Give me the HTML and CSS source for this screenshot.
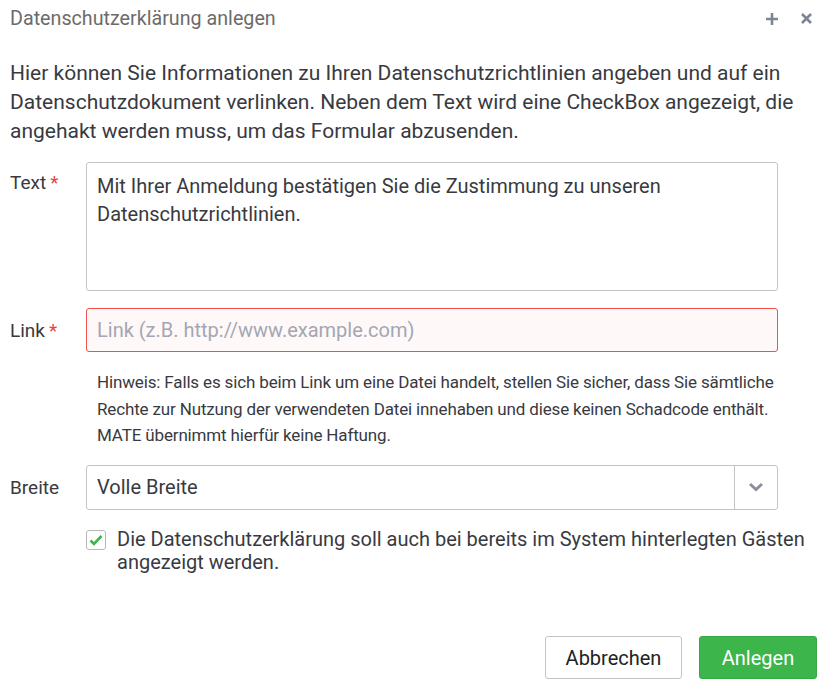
FILE: index.html
```html
<!DOCTYPE html>
<html lang="de">
<head>
    <meta charset="UTF-8">
    <title>Datenschutzerklärung anlegen</title>
    <link rel="stylesheet" href="styles.css">
</head>
<body>
    <div class="dialog">
        <div class="dialog-header">
            <span class="dialog-title">Datenschutzerklärung anlegen</span>
            <div class="header-icons">
                <svg width="14" height="14" viewBox="0 0 14 14"><path d="M7 1v12M1 7h12" stroke="#7d8594" stroke-width="2.6"/></svg>
                <svg width="13" height="13" viewBox="0 0 13 13"><path d="M2 2l9 9M11 2l-9 9" stroke="#7d8594" stroke-width="2.6"/></svg>
            </div>
        </div>

        <p class="intro">Hier können Sie Informationen zu Ihren Datenschutzrichtlinien angeben und auf ein Datenschutzdokument verlinken. Neben dem Text wird eine CheckBox angezeigt, die angehakt werden muss, um das Formular abzusenden.</p>

        <div class="form">
            <div class="form-row">
                <label class="form-label label-top">Text<span class="req">*</span></label>
                <div class="textarea">Mit Ihrer Anmeldung bestätigen Sie die Zustimmung zu unseren Datenschutzrichtlinien.</div>
            </div>

            <div class="form-row">
                <label class="form-label">Link<span class="req">*</span></label>
                <div class="input input-error">Link (z.B. http://www.example.com)</div>
            </div>

            <p class="hint">Hinweis: Falls es sich beim Link um eine Datei handelt, stellen Sie sicher, dass Sie sämtliche Rechte zur Nutzung der verwendeten Datei innehaben und diese keinen Schadcode enthält. MATE übernimmt hierfür keine Haftung.</p>

            <div class="form-row">
                <label class="form-label">Breite</label>
                <div class="select">
                    <span class="select-value">Volle Breite</span>
                    <span class="select-arrow">
                        <svg width="16" height="10" viewBox="0 0 16 10"><path d="M2 2l6 5.5L14 2" fill="none" stroke="#8a8f99" stroke-width="3"/></svg>
                    </span>
                </div>
            </div>

            <div class="check-row">
                <span class="checkbox">
                    <svg width="14" height="12" viewBox="0 0 14 12"><path d="M1.5 6.5l3.5 3.5 7.5-8" fill="none" stroke="#3cb54a" stroke-width="2.6"/></svg>
                </span>
                <span class="check-label">Die Datenschutzerklärung soll auch bei bereits im System hinterlegten Gästen angezeigt werden.</span>
            </div>
        </div>

        <div class="dialog-footer">
            <button class="btn btn-default">Abbrechen</button>
            <button class="btn btn-success">Anlegen</button>
        </div>
    </div>
</body>
</html>
```

FILE: styles.css
```css
* {
    box-sizing: border-box;
}
body {
    margin: 0;
    background-color: #fff;
    font-family: Roboto, "Liberation Sans", sans-serif;
    color: #383a3f;
}
.dialog {
    width: 830px;
    height: 686px;
    display: flex;
    flex-direction: column;
}
.dialog-header {
    display: flex;
    align-items: center;
    justify-content: space-between;
    height: 37px;
    padding: 0 17px 0 10px;
}
.dialog-title {
    font-size: 19.7px;
    color: #6b6b6b;
}
.header-icons {
    display: flex;
    align-items: center;
    gap: 21px;
}
.intro {
    margin: 22px 30px 0 10px;
    font-size: 21px;
    line-height: 29px;
}
.form {
    padding: 16px 52px 0 10px;
}
.form-row {
    display: flex;
    align-items: center;
    margin-bottom: 17px;
}
.form-label {
    width: 76px;
    flex-shrink: 0;
    font-size: 19px;
}
.label-top {
    align-self: flex-start;
    padding-top: 9px;
}
.req {
    color: #e8423f;
    margin-left: 4px;
}
.textarea {
    flex: 1;
    height: 129px;
    padding: 9px 10px;
    border: 1px solid #c4c4c4;
    border-radius: 3px;
    font-size: 20px;
    line-height: 28px;
}
.input {
    flex: 1;
    height: 44px;
    padding: 0 10px;
    display: flex;
    align-items: center;
    border: 1px solid #c4c4c4;
    border-radius: 3px;
    font-size: 20px;
}
.input-error {
    border-color: #f2504c;
    background-color: #fff8f8;
    color: #a3a7b3;
}
.hint {
    margin: 0 0 16px 87px;
    font-size: 17px;
    line-height: 26.5px;
    letter-spacing: -0.15px;
}
.select {
    flex: 1;
    height: 45px;
    display: flex;
    border: 1px solid #c4c4c4;
    border-radius: 3px;
}
.select-value {
    flex: 1;
    display: flex;
    align-items: center;
    padding-left: 10px;
    font-size: 20px;
}
.select-arrow {
    width: 43px;
    border-left: 1px solid #c4c4c4;
    display: flex;
    align-items: center;
    justify-content: center;
}
.check-row {
    display: flex;
    margin: 20px -40px 0 76px;
}
.checkbox {
    width: 20px;
    height: 20px;
    flex-shrink: 0;
    border: 1px solid #b9b9b9;
    border-radius: 3px;
    display: flex;
    align-items: center;
    justify-content: center;
}
.check-label {
    margin-left: 11px;
    font-size: 20px;
    line-height: 23px;
    margin-top: -2px;
}
.dialog-footer {
    margin-top: auto;
    display: flex;
    justify-content: flex-end;
    gap: 17px;
    padding: 0 13px 7px 0;
}
.btn {
    height: 43px;
    font-family: Roboto, "Liberation Sans", sans-serif;
    font-size: 20px;
    border-radius: 3px;
    cursor: pointer;
}
.btn-default {
    width: 137px;
    background-color: #fff;
    border: 1px solid #c4c4c4;
    color: #222;
}
.btn-success {
    width: 118px;
    background-color: #3cb54a;
    border: 1px solid #37a844;
    color: #fff;
}
```
